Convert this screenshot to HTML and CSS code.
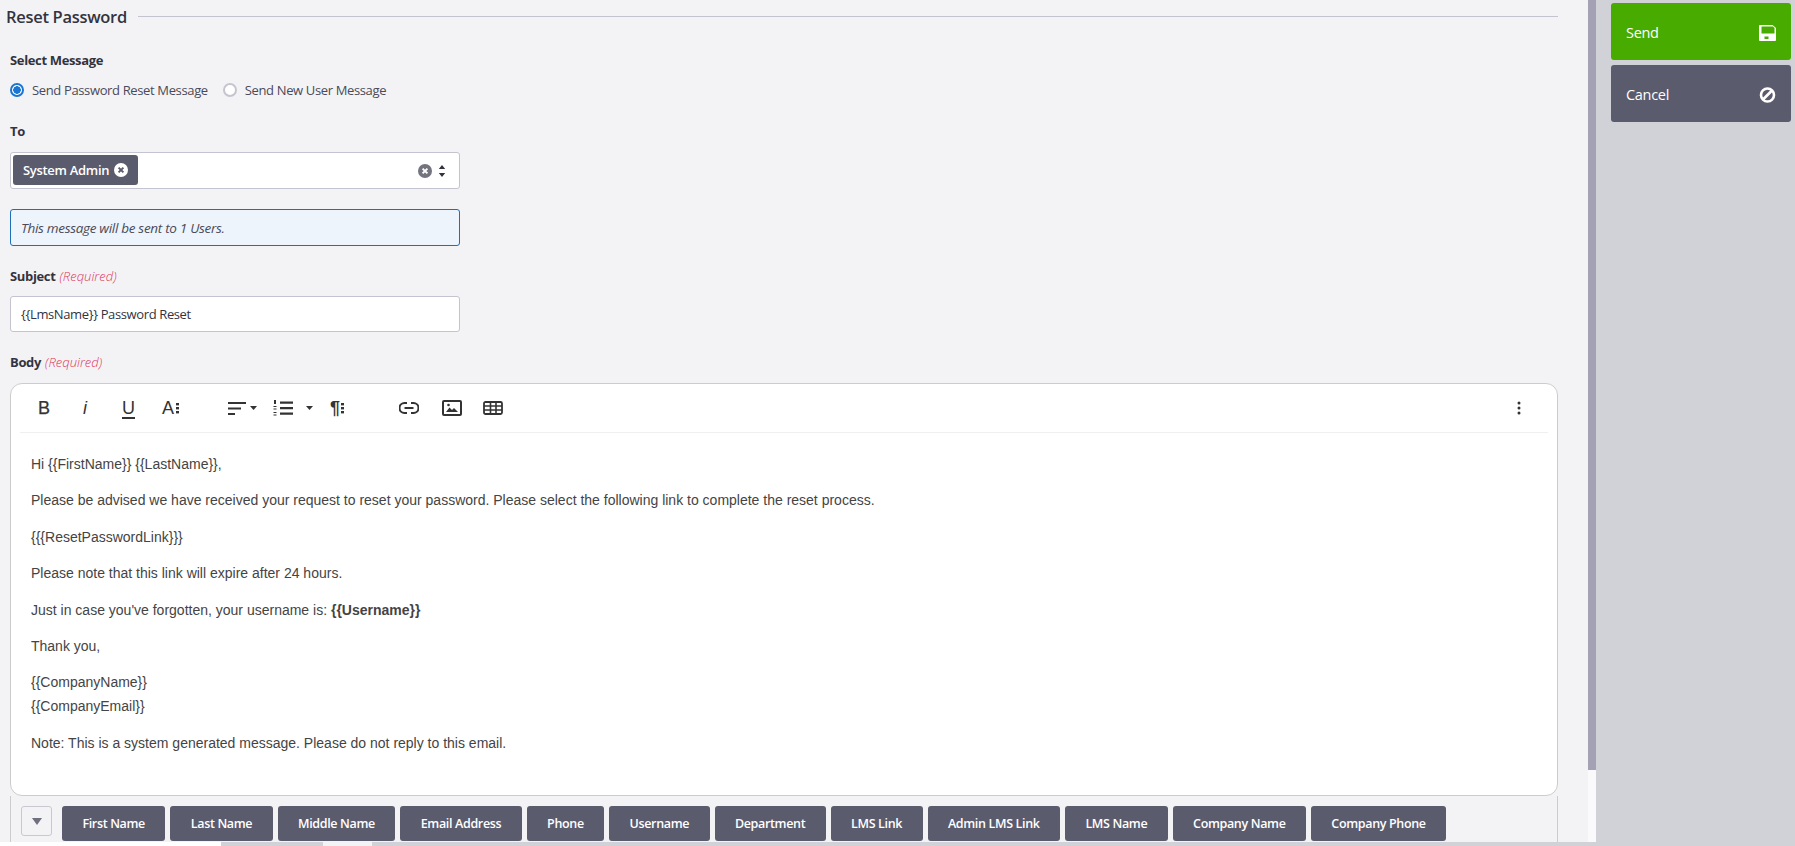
FILE: index.html
```html
<!DOCTYPE html>
<html lang="en">
<head>
<meta charset="utf-8">
<title>Reset Password</title>
<link rel="stylesheet" href="styles.css">
</head>
<body>
<div class="app">
  <div class="top">
    <main class="main">
      <div class="heading"><h1>Reset Password</h1><span class="rule"></span></div>
      <div class="label first">Select Message</div>
      <div class="radios">
        <label class="radio"><span class="dot on"></span>Send Password Reset Message</label>
        <label class="radio"><span class="dot"></span>Send New User Message</label>
      </div>
      <div class="label to">To</div>
      <div class="select">
        <span class="chip">System Admin
          <svg class="chipx" viewBox="0 0 14 14"><circle cx="7" cy="7" r="7" fill="#fff"/><path d="M4.6 4.6l4.8 4.8M9.4 4.6l-4.8 4.8" stroke="#5b5b6e" stroke-width="2"/></svg>
        </span>
        <span class="sel-icons">
          <svg class="clear" viewBox="0 0 14 14"><circle cx="7" cy="7" r="7" fill="#74747f"/><path d="M4.6 4.6l4.8 4.8M9.4 4.6l-4.8 4.8" stroke="#fff" stroke-width="2"/></svg>
          <svg class="updown" viewBox="0 0 8 14"><path d="M4 1L7.2 5H.8zM4 13L.8 9h6.4z" fill="#33333f"/></svg>
        </span>
      </div>
      <div class="info">This message will be sent to 1 Users.</div>
      <div class="label subject">Subject <em>(Required)</em></div>
      <div class="input">{{LmsName}} Password Reset</div>
      <div class="label body-label">Body <em>(Required)</em></div>
      <section class="editor">
        <div class="toolbar">
          <div class="tools">
            <span class="t tb">B</span>
            <span class="t ti">i</span>
            <span class="t tu">U</span>
            <span class="t ta">A<svg class="dots3" viewBox="0 0 3 12"><rect x="0" y="1" width="3" height="2.4"/><rect x="0" y="5" width="3" height="2.4"/><rect x="0" y="9" width="3" height="2.4"/></svg></span>
            <svg class="ic align" viewBox="0 0 29 14"><path d="M0 1h18v2H0zM0 6.500h13v2H0zM0 12h7v2H0z"/><path d="M22 5h7l-3.500 4z"/></svg>
            <svg class="ic list" viewBox="0 0 40 16"><path d="M7 1.500h13v2.200H7zM7 7h13v2.200H7zM7 12.500h13v2.200H7z"/><path d="M1 0h2v4H1zM.5 6h3v1H.5zM.5 8.500h3v1H.5zM.5 12h3v1H.5zM.5 14.500h3v1H.5z"/><path d="M33 6h7l-3.500 4z"/></svg>
            <span class="t tp">¶<svg class="dots3" viewBox="0 0 3 12"><rect x="0" y="1" width="3" height="2.4"/><rect x="0" y="5" width="3" height="2.4"/><rect x="0" y="9" width="3" height="2.4"/></svg></span>
            <svg class="ic link" viewBox="0 0 20 12"><path d="M8 1H5.500a5 5 0 000 10H8M12 1h2.500a5 5 0 010 10H12M5.500 6h9" fill="none" stroke="#333" stroke-width="2"/></svg>
            <svg class="ic image" viewBox="0 0 20 16"><rect x="1" y="1" width="18" height="14" rx="1" fill="none" stroke="#333" stroke-width="2"/><path d="M4 12l3.500-4.500 2.500 2.500 2-2 4 4z"/><circle cx="6.500" cy="5" r="1.300"/></svg>
            <svg class="ic table" viewBox="0 0 20 14"><rect x="1" y="1" width="18" height="12" rx="1.500" fill="none" stroke="#333" stroke-width="1.800"/><path d="M1 5h18M1 9h18M7.500 1v12M13 1v12" fill="none" stroke="#333" stroke-width="1.600"/></svg>
          </div>
          <svg class="more" viewBox="0 0 4 14"><circle cx="2" cy="2" r="1.500"/><circle cx="2" cy="7" r="1.500"/><circle cx="2" cy="12" r="1.500"/></svg>
        </div>
        <div class="content">
          <p>Hi {{FirstName}} {{LastName}},</p>
          <p>Please be advised we have received your request to reset your password. Please select the following link to complete the reset process.</p>
          <p>{{{ResetPasswordLink}}}</p>
          <p>Please note that this link will expire after 24 hours.</p>
          <p>Just in case you've forgotten, your username is: <strong>{{Username}}</strong></p>
          <p>Thank you,</p>
          <p>{{CompanyName}}<br>{{CompanyEmail}}</p>
          <p>Note: This is a system generated message. Please do not reply to this email.</p>
        </div>
      </section>
      <div class="tags">
        <button class="toggle"><span class="tri"></span></button>
        <button class="tag">First Name</button>
        <button class="tag">Last Name</button>
        <button class="tag">Middle Name</button>
        <button class="tag">Email Address</button>
        <button class="tag">Phone</button>
        <button class="tag">Username</button>
        <button class="tag">Department</button>
        <button class="tag">LMS Link</button>
        <button class="tag">Admin LMS Link</button>
        <button class="tag">LMS Name</button>
        <button class="tag">Company Name</button>
        <button class="tag">Company Phone</button>
      </div>
    </main>
    <div class="vscroll"><div class="vthumb"></div></div>
    <aside class="side">
      <button class="action send">Send
        <svg class="aicon" viewBox="0 0 17 16"><path d="M1 0h12.500l3.500 3v12a1 1 0 01-1 1H1a1 1 0 01-1-1V1a1 1 0 011-1z" fill="#fff"/><path d="M2.500 1.500h11.500l1.500 1.500v5.500h-13z" fill="#48ab00"/><path d="M5.500 11.500h4v2.500h-4z" fill="#48ab00"/></svg>
      </button>
      <button class="action cancel">Cancel
        <svg class="aicon" viewBox="0 0 16 16"><circle cx="8" cy="8" r="6.500" fill="none" stroke="#fff" stroke-width="2.600"/><path d="M3.500 12.500l9-9" stroke="#fff" stroke-width="2.600"/></svg>
      </button>
    </aside>
  </div>
  <div class="hscroll"><span class="hs-white"></span><span class="hs-a"></span><span class="hs-b"></span><span class="hs-c"></span></div>
</div>
</body>
</html>
```
FILE: styles.css
```css
* { box-sizing: border-box; }
html, body { margin: 0; height: 100%; overflow: hidden; }
body { font-family: "Open Sans", "Liberation Sans", sans-serif; color: #3d3d4d; background: #f3f3f5; }
.app { width: 1795px; height: 846px; display: flex; flex-direction: column; }
.top { flex: 1; display: flex; min-height: 0; }
.main { width: 1588px; background: #f3f3f5; padding: 0 30px 0 10px; overflow: hidden; }
.heading { display: flex; align-items: center; height: 32px; margin-left: -4px; gap: 11px; }
.heading h1 { margin: 0; font-size: 16.500px; font-weight: 600; color: #33333f; letter-spacing: -.3px; }
.rule { flex: 1; height: 1px; background: #c4c3d0; }
.label { font-size: 13px; font-weight: 700; color: #33333f; letter-spacing: -.35px; line-height: 18px; }
.label em { font-weight: 300; font-style: italic; color: #e0355e; letter-spacing: 0; margin-left: 1px; }
.first { margin-top: 19px; }
.radios { display: flex; gap: 15px; margin-top: 11px; height: 20px; align-items: center; }
.radio { display: flex; align-items: center; gap: 8px; font-size: 13px; letter-spacing: -.36px; color: #4a4a5a; }
.dot { width: 14px; height: 14px; border-radius: 50%; border: 2px solid #c6c5cf; background: #fff; }
.dot.on { border-color: #1976d2; background: radial-gradient(circle, #1976d2 0 3.500px, #fff 4px); }
.to { margin-top: 22px; }
.select { width: 450px; height: 37px; margin-top: 12px; background: #fff; border: 1px solid #c4c3d0; border-radius: 3px; display: flex; align-items: center; justify-content: space-between; padding: 0 13px 0 2px; }
.chip { height: 30px; margin-bottom: 2px; background: #5b5b6e; border-radius: 3px; color: #fff; font-size: 13px; font-weight: 600; letter-spacing: -.3px; display: flex; align-items: center; gap: 5px; padding: 0 10px; }
.chipx { width: 14px; height: 14px; }
.sel-icons { display: flex; align-items: center; gap: 6px; }
.clear { width: 14px; height: 14px; }
.updown { width: 8px; height: 14px; }
.info { width: 450px; height: 37px; margin-top: 20px; background: #edf4fc; border: 1px solid #1f6fb8; border-radius: 3px; display: flex; align-items: center; padding: 0 10px; font-size: 13.500px; font-style: italic; letter-spacing: -.3px; color: #4a4a5a; }
.subject { margin-top: 21px; }
.input { width: 450px; height: 36px; margin-top: 11px; background: #fff; border: 1px solid #c4c3d0; border-radius: 3px; display: flex; align-items: center; padding: 0 10px; font-size: 13px; letter-spacing: -.38px; color: #33333f; }
.body-label { margin-top: 21px; }
.editor { width: 1548px; height: 413px; margin-top: 12px; background: #fff; border: 1px solid #cccccc; border-radius: 12px; overflow: hidden; }
.toolbar { margin: 0 9px; height: 49px; border-bottom: 1px solid #efefef; display: flex; align-items: center; justify-content: space-between; padding: 0 27px 0 18px; }
.tools { display: flex; align-items: center; color: #333; }
.t { font-family: "Liberation Sans", sans-serif; font-size: 18px; color: #333; display: flex; align-items: center; }
.tb { width: 42px; -webkit-text-stroke: .25px #333; }
.ti { width: 42px; font-style: italic; padding-left: 3px; }
.tu { width: 40px; text-decoration: underline; text-decoration-thickness: 2px; text-underline-offset: 3px; }
.ta { width: 66px; gap: 2px; }
.dots3 { width: 3px; height: 12px; fill: #333; }
.ic { fill: #333; }
.align { width: 29px; height: 14px; margin-right: 16px; }
.list { width: 40px; height: 16px; margin-right: 17px; }
.tp { width: 69px; gap: 1px; font-weight: 700; }
.link { width: 20px; height: 12px; margin-right: 23px; }
.image { width: 20px; height: 16px; margin-right: 21px; }
.table { width: 20px; height: 14px; }
.more { width: 4px; height: 14px; fill: #333; }
.content { padding: 19px 18px 0 20px; font-family: "Liberation Sans", Arial, sans-serif; font-size: 14px; line-height: 24px; color: #444; }
.content p { margin: 0 0 12.400px; }
.tags { width: 1548px; height: 46px; border-left: 1px solid #ccc; border-right: 1px solid #ccc; padding: 10px 0 0 10px; display: flex; gap: 5px; align-items: flex-start; }
.toggle { width: 31px; height: 30px; border: 1px solid #c8c8d0; border-radius: 3px; background: #f3f3f5; display: flex; align-items: center; justify-content: center; padding: 0; margin-right: 5px; }
.tri { width: 0; height: 0; border-left: 5.500px solid transparent; border-right: 5.500px solid transparent; border-top: 7px solid #6f6f80; }
.tag { height: 35px; background: #5b5b6e; color: #fff; border: 0; border-radius: 3px; padding: 0 20.400px; font-family: "Open Sans", sans-serif; font-size: 12.500px; font-weight: 600; letter-spacing: -.34px; }
.vscroll { width: 8px; background: #fafafc; }
.vthumb { height: 770px; background: #a3a1b3; }
.side { flex: 1; background: #d1d2d7; padding: 3px 4px 0 15px; display: flex; flex-direction: column; gap: 5px; }
.action { width: 180px; height: 57px; border: 0; border-radius: 3px; color: #fff; display: flex; align-items: center; justify-content: space-between; padding: 2px 15px 0 15px; font-family: "Open Sans", sans-serif; font-size: 14.500px; letter-spacing: -.3px; }
.send { background: #48ab00; }
.cancel { background: #5b5b6e; }
.aicon { width: 17px; height: 16px; }
.hscroll { height: 4px; display: flex; background: #d1d2d7; }
.hs-white { width: 221px; background: #fff; }
.hs-a { width: 102px; background: #d1d2d7; }
.hs-b { width: 49px; background: #f3f3f5; }
.hs-c { flex: 1; background: #d1d2d7; }
```
